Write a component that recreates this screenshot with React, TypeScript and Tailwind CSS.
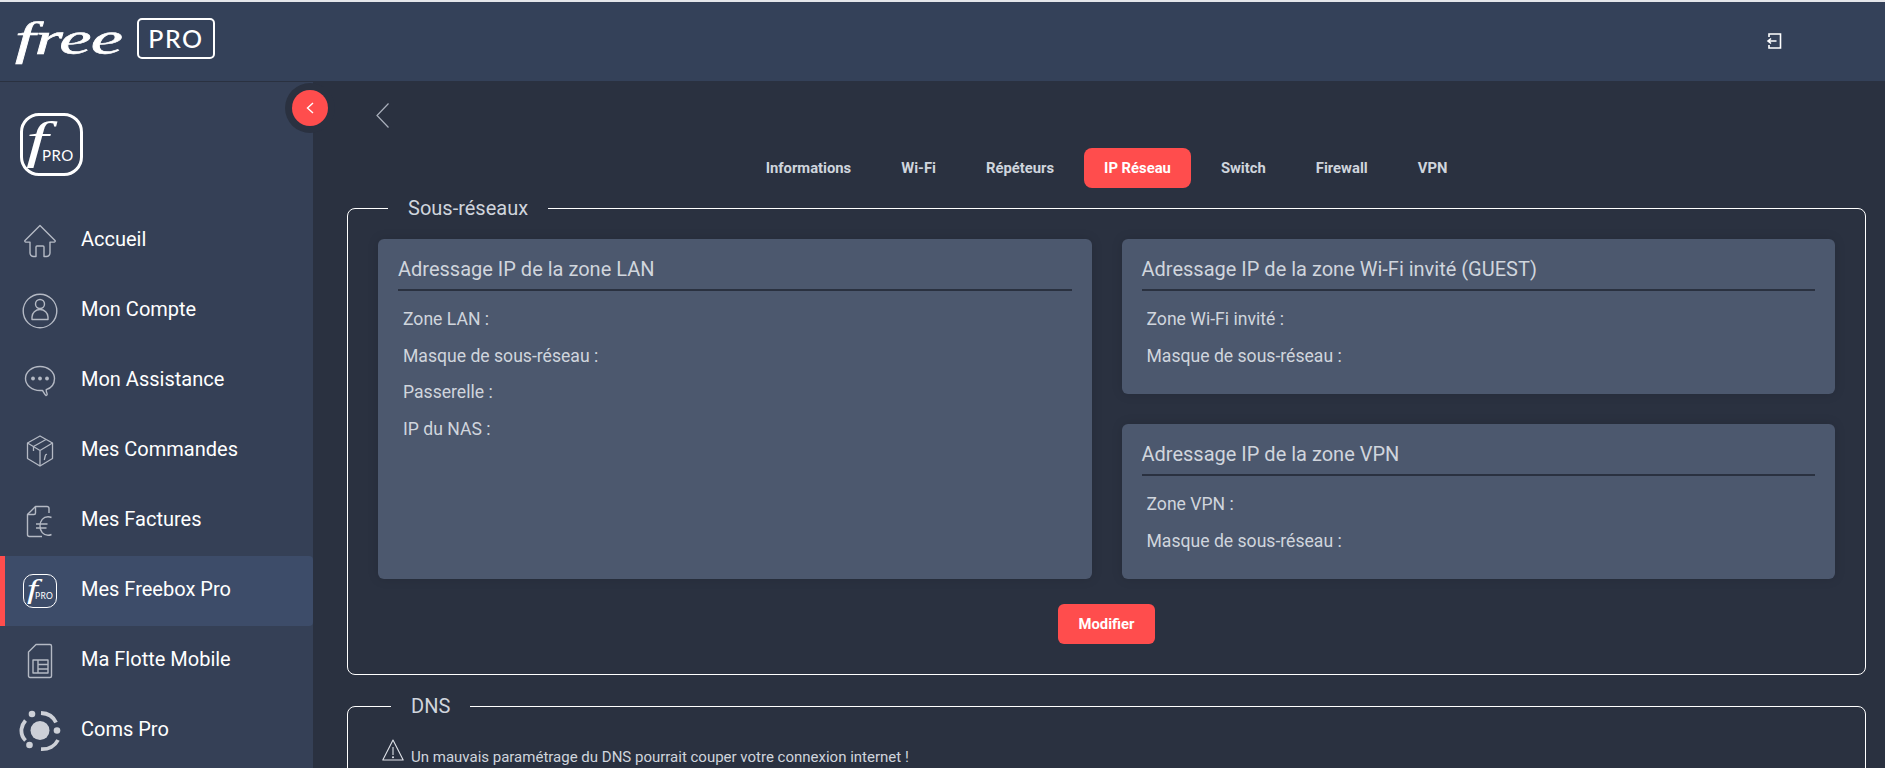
import type { ReactNode } from 'react';

const iconStroke = '#b4b9c4';

function HomeIcon() {
  return (
    <svg width="34" height="34" viewBox="0 0 34 34" fill="none" stroke={iconStroke} strokeWidth="1.4" strokeLinejoin="round">
      <path d="M17 1.500 2 16.500a1 1 0 0 0 .8 1.600H7V29a3.500 3.500 0 0 0 3.500 3.500H13V23a1 1 0 0 1 1-1h6a1 1 0 0 1 1 1v9.500h2.500A3.500 3.500 0 0 0 27 29V18.100h4.200a1 1 0 0 0 .8-1.600z" />
    </svg>
  );
}

function UserIcon() {
  return (
    <svg width="36" height="36" viewBox="0 0 36 36" fill="none" stroke={iconStroke} strokeWidth="1.4">
      <circle cx="18" cy="18" r="16.800" />
      <circle cx="18" cy="11" r="4.500" />
      <path d="M10 26.500v-2.500a8 7.500 0 0 1 16 0v2.500z" strokeLinejoin="round" />
    </svg>
  );
}

function ChatIcon() {
  return (
    <svg width="32" height="32" viewBox="0 0 32 32" fill="none" stroke={iconStroke} strokeWidth="1.4">
      <path d="M16 1.500C8 1.500 1.500 7 1.500 13.500S8 25.500 16 25.500h2.500c1 1.500 1.800 3.500 3.500 5 .8-.2 1.500-.8 1-2-.4-.9-.8-2-.8-3.800C27.500 23 30.500 18.500 30.500 13.500 30.500 7 24 1.500 16 1.500z" strokeLinejoin="round" />
      <circle cx="9" cy="13.500" r="1.900" fill={iconStroke} stroke="none" />
      <circle cx="16" cy="13.500" r="1.900" fill={iconStroke} stroke="none" />
      <circle cx="23" cy="13.500" r="1.900" fill={iconStroke} stroke="none" />
    </svg>
  );
}

function BoxIcon() {
  return (
    <svg width="28" height="32" viewBox="0 0 28 32" fill="none" stroke={iconStroke} strokeWidth="1.300" strokeLinejoin="round">
      <path d="M14 1 1.500 8v15.500L14 31l12.500-7.500V8z" />
      <path d="M1.500 8 14 15.500 26.500 8M14 15.500V31" />
      <path d="M7.500 11.500 20 4.500" />
      <path d="M7.500 11.500v4.500" />
      <path d="M21 19.500c-1.200-.4-1.600.6-1.900 2l-.8 3.500" />
    </svg>
  );
}

function InvoiceIcon() {
  return (
    <svg width="27" height="33" viewBox="0 0 27 33" fill="none" stroke={iconStroke} strokeWidth="1.400" strokeLinejoin="round">
      <path d="M23 8V3.500a2 2 0 0 0-2-2H9.500L1.500 9.500V29.500a2 2 0 0 0 2 2H16" />
      <path d="M9.500 1.500v6.500a1.500 1.500 0 0 1-1.500 1.500H1.500" />
      <path d="M25.500 12.500a8.500 8.500 0 0 0-3.500-.8c-4.800 0-8 4-8 9.300s3.200 9.300 8 9.300a8.500 8.500 0 0 0 3.500-.8" />
      <path d="M10 19h11.500M10 23h10.500" />
    </svg>
  );
}

function SimIcon() {
  return (
    <svg width="26" height="36" viewBox="0 0 26 36" fill="none" stroke={iconStroke} strokeWidth="1.400" strokeLinejoin="round">
      <path d="M9 1.500h14a1.500 1.500 0 0 1 1.500 1.500v30a1.500 1.500 0 0 1-1.500 1.500H3A1.500 1.500 0 0 1 1.500 33V9z" />
      <path d="M6 17h15v13H6zM11 17v13M11 21.500h10M11 26h10" />
    </svg>
  );
}

function ComsIcon() {
  return (
    <svg width="42" height="42" viewBox="0 0 42 42" fill="none" stroke="#cdd0d7" strokeWidth="3.800">
      <circle cx="21" cy="20.500" r="9.500" fill="#cdd0d7" stroke="none" />
      <path d="M22 3c7 .3 12.500 4 15 9.500" />
      <path d="M39 30c-3 6-9.500 9.500-17 9.200" />
      <path d="M6.500 30.500C3.500 27.500 2 24 2.500 19 3 15.500 4.500 12.800 6.500 10.500" />
      <circle cx="13" cy="4" r="3.300" fill="#cdd0d7" stroke="none" />
      <circle cx="38" cy="20.500" r="3.300" fill="#cdd0d7" stroke="none" />
      <circle cx="10.500" cy="35" r="3.300" fill="#cdd0d7" stroke="none" />
    </svg>
  );
}

function FreeSquare({ big }: { big?: boolean }) {
  if (big) {
    return (
      <div className="relative w-[63px] h-[63px] rounded-[19px] border-[3px] border-white">
        <span className="absolute left-[3px] top-[-6px] origin-left scale-x-[1.6] text-[50px] leading-[60px] italic text-white font-['Liberation_Serif',serif]">f</span>
        <span className="absolute left-[19px] top-[30px] text-[15px] leading-[18px] tracking-[0.5px] text-white font-['Lato',sans-serif]">PRO</span>
      </div>
    );
  }
  return (
    <div className="relative w-[34px] h-[34px] rounded-[10px] border-[1.5px] border-white">
      <span className="absolute left-[3px] top-[-1px] origin-left scale-x-[1.45] text-[27px] leading-[30px] italic text-white font-['Liberation_Serif',serif]">f</span>
      <span className="absolute left-[11px] top-[16px] text-[8.500px] leading-[10px] tracking-[0.3px] text-white font-['Lato',sans-serif]">PRO</span>
    </div>
  );
}

const navItems: { label: string; icon: ReactNode; active?: boolean }[] = [
  { label: 'Accueil', icon: <HomeIcon /> },
  { label: 'Mon Compte', icon: <UserIcon /> },
  { label: 'Mon Assistance', icon: <ChatIcon /> },
  { label: 'Mes Commandes', icon: <BoxIcon /> },
  { label: 'Mes Factures', icon: <InvoiceIcon /> },
  { label: 'Mes Freebox Pro', icon: <FreeSquare />, active: true },
  { label: 'Ma Flotte Mobile', icon: <SimIcon /> },
  { label: 'Coms Pro', icon: <ComsIcon /> },
];

const tabs = ['Informations', 'Wi-Fi', 'Répéteurs', 'IP Réseau', 'Switch', 'Firewall', 'VPN'];

function IpCard({ title, rows, className }: { title: string; rows: string[]; className?: string }) {
  return (
    <div className={`rounded-md bg-[#4c586e] px-5 pt-5 shadow-[0_0_12px_rgba(0,0,0,0.12)] ${className ?? ''}`}>
      <h3 className="pb-[10px] border-b-2 border-[#2a3140] text-[20px] leading-5 text-[#d0d5dd]">{title}</h3>
      <div className="pt-[10px] pl-[5px]">
        {rows.map((row) => (
          <div key={row} className="h-[36.500px] flex items-center text-[17.600px] text-[#d0d5dd]">
            {row}
          </div>
        ))}
      </div>
    </div>
  );
}

export default function App() {
  return (
    <div className="h-[768px] w-[1885px] overflow-hidden flex flex-col bg-[#2a3140] font-['Roboto',sans-serif]">
      {/* Header */}
      <header className="h-[82px] shrink-0 flex items-start border-t-2 border-t-[#e4e6ea] border-b border-b-[#2a3140] bg-[#344159]">
        <div className="ml-[15px] mt-[16px] flex items-start">
          <span className="w-[112px] text-[46px] leading-[42px] italic text-white [-webkit-text-stroke:0.6px_white] font-['Liberation_Serif',serif] origin-left scale-x-[1.58] tracking-[-0.5px]">free</span>
          <div className="ml-[10px] w-[78px] h-[41px] rounded-[5px] border-2 border-white flex items-center justify-center text-[25px] font-medium tracking-[1.5px] text-white font-['Lato',sans-serif]">
            PRO
          </div>
        </div>
        <svg className="ml-auto mr-[103px] mt-[31px]" width="16" height="16" viewBox="0 0 16 16" fill="none" stroke="white" strokeWidth="1.600">
          <path d="M3 4V1h11.500v14H3v-3" />
          <path d="M10.500 8H3M5 5.500 2 8l3 2.500" />
        </svg>
      </header>

      <div className="relative flex flex-1 min-h-0">
        {/* Sidebar */}
        <aside className="w-[313px] shrink-0 bg-[#354056]">
          <div className="h-[124px] pl-[20px] pt-[31px]">
            <FreeSquare big />
          </div>
          <nav>
            {navItems.map((item) => (
              <div
                key={item.label}
                className={`h-[70px] flex items-center rounded-r-sm ${item.active ? 'bg-[#3d4c69] border-l-[5px] border-[#ff4d4d]' : ''}`}
              >
                <div className={`flex justify-center ${item.active ? 'w-[70px]' : 'w-[81px] pr-[2px]'}`}>{item.icon}</div>
                <span className={`pb-[4px] text-[20px] text-white ${item.active ? 'ml-[6px]' : ''}`}>{item.label}</span>
              </div>
            ))}
          </nav>
        </aside>

        {/* Collapse button */}
        <div className="absolute left-[285px] top-[1px] w-[50px] h-[50px] rounded-full bg-[#2a3140] flex items-center justify-center">
          <div className="w-[36px] h-[36px] rounded-full bg-[#ff4d4d] flex items-center justify-center">
            <svg width="8" height="12" viewBox="0 0 8 12" fill="none" stroke="white" strokeWidth="1.400">
              <path d="M7 1 1.500 6 7 11" />
            </svg>
          </div>
        </div>

        {/* Main */}
        <main className="flex-1 min-w-0 pl-[34px] pr-[19px]">
          <div className="h-[66px] pl-[29px] pt-[21px]">
            <svg width="13" height="25" viewBox="0 0 13 25" fill="none" stroke="#aab0bc" strokeWidth="1.200">
              <path d="M12.500 .5 1 12.500 12.500 24.500" />
            </svg>
          </div>

          <div className="flex justify-center gap-[10px]">
            {tabs.map((tab) => (
              <div
                key={tab}
                className={`h-10 px-5 flex items-center rounded-lg text-[14.800px] font-bold ${tab === 'IP Réseau' ? 'bg-[#ff4d4d] text-white' : 'text-[#cfd5dd]'}`}
              >
                {tab}
              </div>
            ))}
          </div>

          <fieldset className="mt-[9px] border border-white rounded-lg px-[30px] pb-[30px]">
            <legend className="ml-[10px] px-5 text-[20px] leading-[23px] text-[#d0d5dd]">Sous-réseaux</legend>
            <div className="pt-[19px] grid grid-cols-2 gap-[30px]">
              <IpCard title="Adressage IP de la zone LAN" rows={['Zone LAN :', 'Masque de sous-réseau :', 'Passerelle :', 'IP du NAS :']} />
              <div className="flex flex-col gap-[30px]">
                <IpCard className="h-[155px]" title="Adressage IP de la zone Wi-Fi invité (GUEST)" rows={['Zone Wi-Fi invité :', 'Masque de sous-réseau :']} />
                <IpCard className="h-[155px]" title="Adressage IP de la zone VPN" rows={['Zone VPN :', 'Masque de sous-réseau :']} />
              </div>
            </div>
            <div className="mt-[25px] flex justify-center">
              <button className="w-[97px] h-10 rounded-md bg-[#ff4d4d] text-white text-[14.800px] font-bold">Modifier</button>
            </div>
          </fieldset>

          <fieldset className="mt-[20px] border border-white rounded-lg px-[34px] h-[200px]">
            <legend className="ml-[9px] px-5 text-[20px] leading-[23px] text-[#d0d5dd]">DNS</legend>
            <div className="mt-[21px] flex items-start gap-[7px]">
              <svg width="22" height="22" viewBox="0 0 22 22" fill="none" stroke="#dfe2e8" strokeWidth="1.100" strokeLinejoin="round">
                <path d="M11 1 .8 21h20.400zM11 8v8" />
                <circle cx="11" cy="18.300" r=".5" />
              </svg>
              <span className="pt-[10px] text-[15px] leading-[17px] text-[#d0d5dd]">Un mauvais paramétrage du DNS pourrait couper votre connexion internet !</span>
            </div>
          </fieldset>
        </main>
      </div>
    </div>
  );
}
